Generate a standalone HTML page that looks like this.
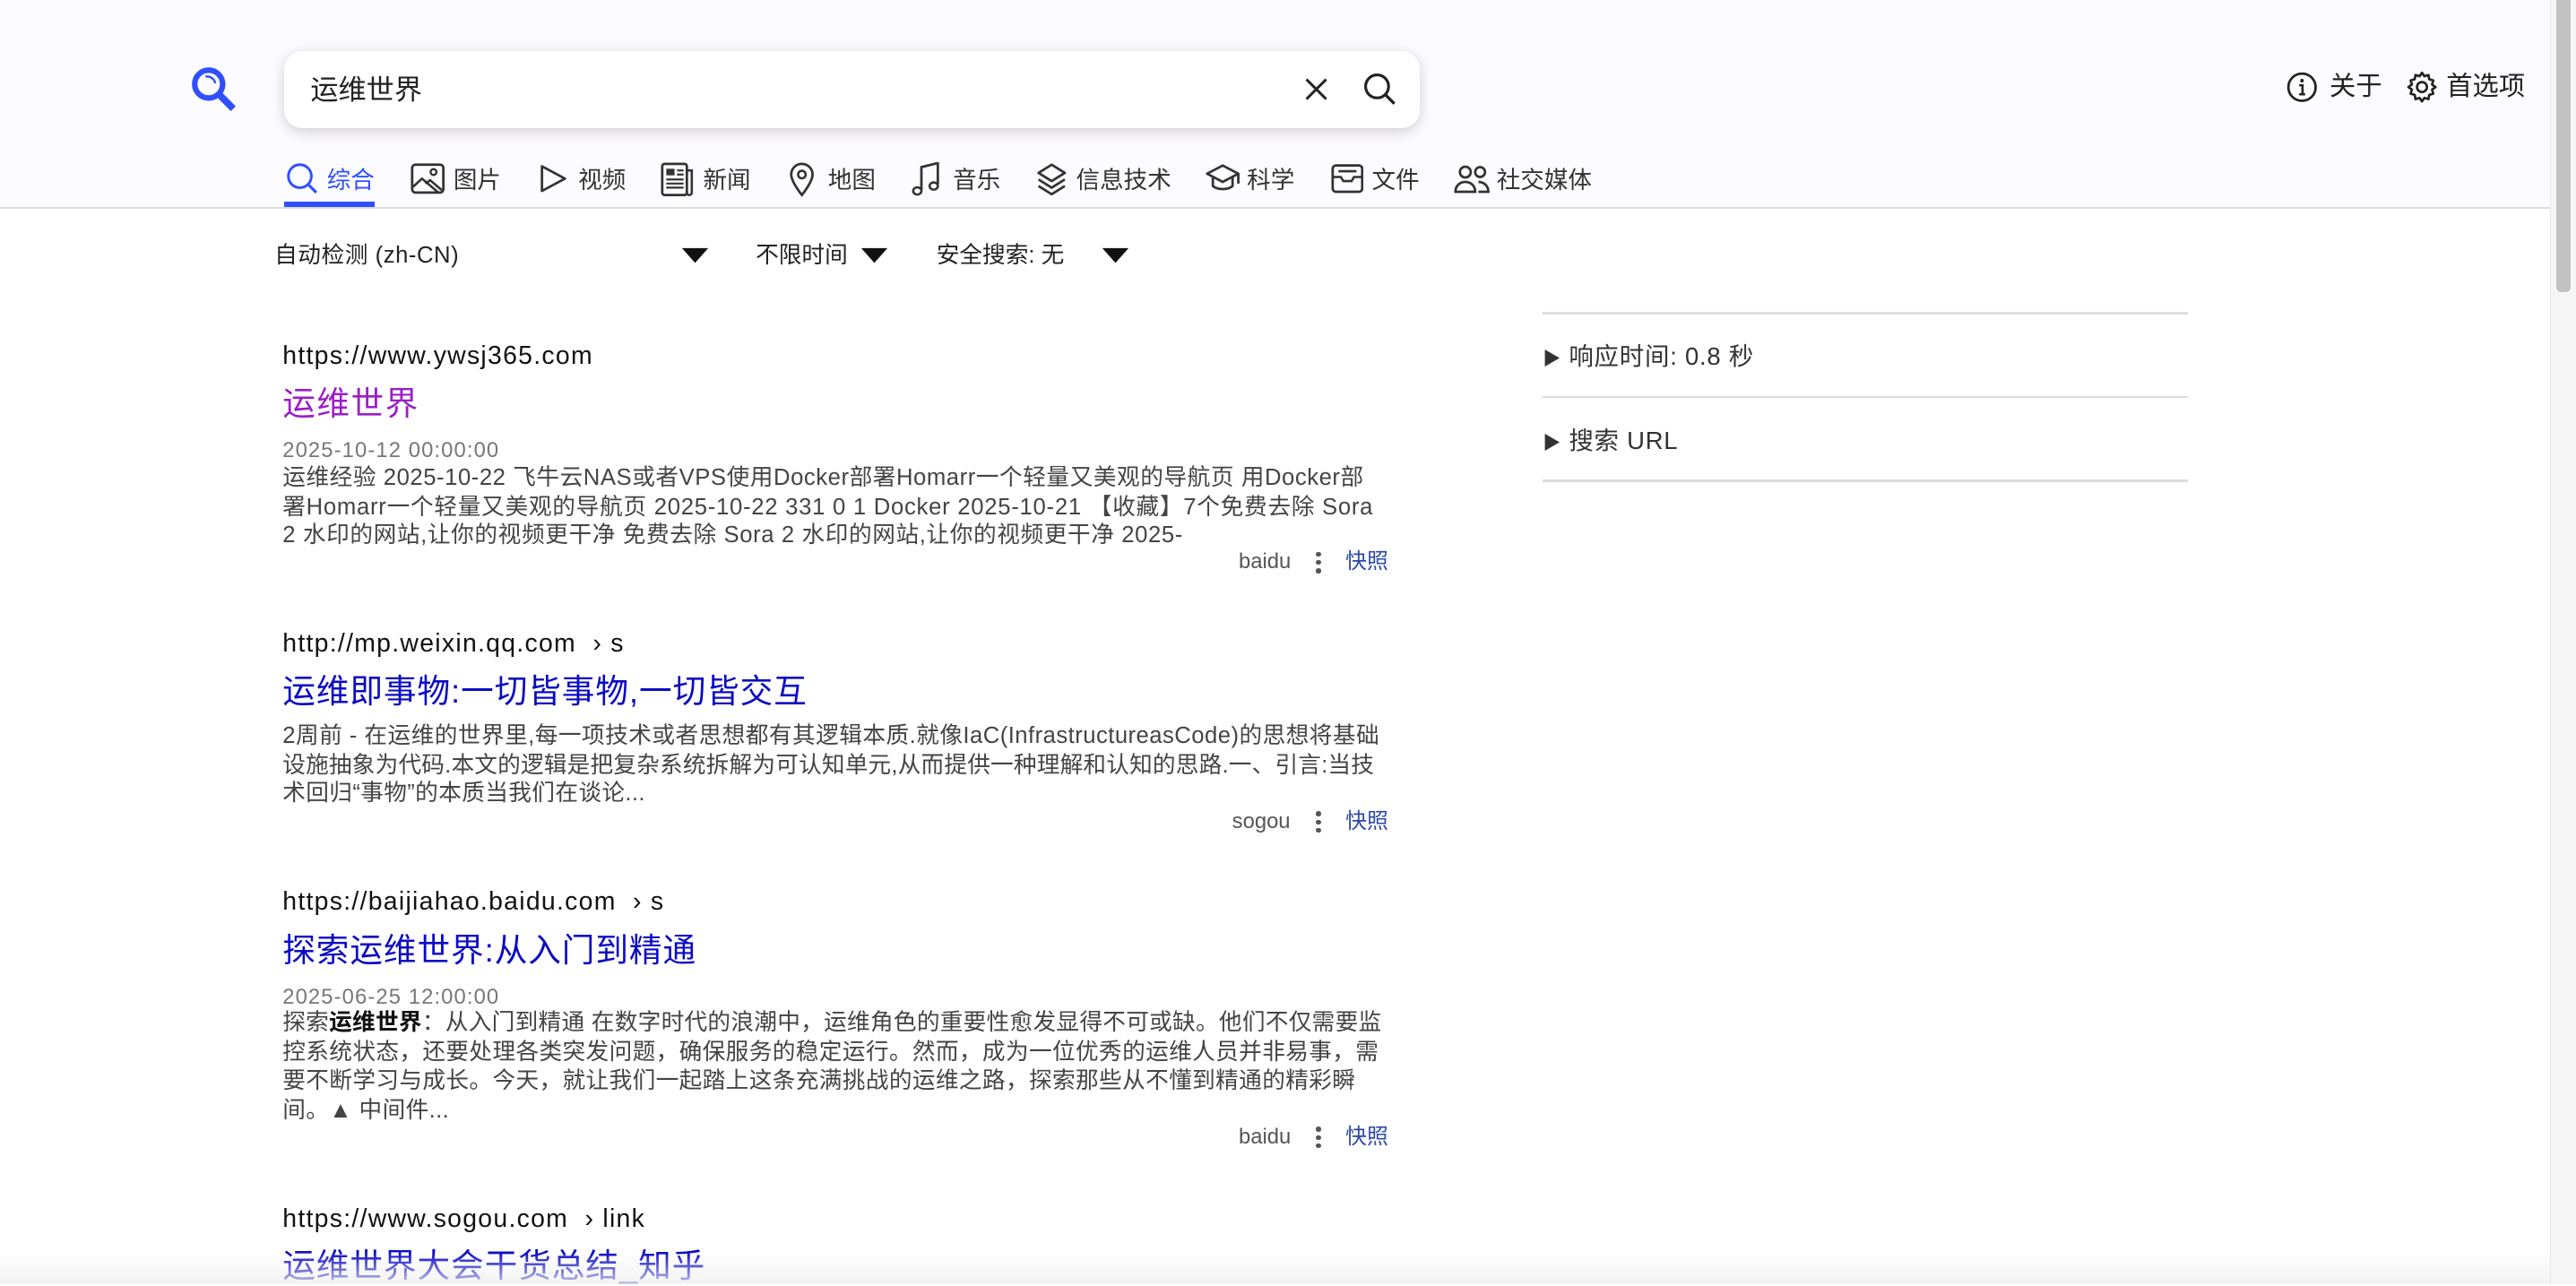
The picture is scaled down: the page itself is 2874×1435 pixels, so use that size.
<!DOCTYPE html>
<html><head><meta charset="utf-8">
<style>
html{zoom:1.8329}
*{margin:0;padding:0;box-sizing:border-box}
body{width:1568px;height:782px;overflow:hidden;background:#fff;font-family:"Liberation Sans","Noto Sans CJK SC",sans-serif;color:#222;position:relative}
.a{position:absolute;white-space:nowrap}
#hdr{position:absolute;left:0;top:0;width:1552px;height:127px;background:#fcfbff;border-bottom:1.5px solid #ddd}
#box{position:absolute;left:173px;top:31px;width:691px;height:47px;background:#fff;border-radius:11px;box-shadow:0 2px 8px rgba(0,0,0,.18)}
.tab{position:absolute;top:99px;height:22px;font-size:14.5px;line-height:22px;color:#333}
.tab svg{position:absolute;left:0;top:0}
.tab span{position:absolute;white-space:nowrap}
.url{font-size:15.5px;color:#111;line-height:18px;letter-spacing:.7px}
.ttl{font-size:20px;color:#0b0bc4;line-height:24px;letter-spacing:.5px}
.dt{font-size:13px;color:#777;line-height:16px;letter-spacing:.6px}
.sn{font-size:14px;color:#444;line-height:17.5px}
.eng{font-size:13px;color:#555;line-height:16px}
.kz{font-size:13px;color:#2a48a8;line-height:16px}
.dots{position:absolute;width:3px}
.dots i{display:block;width:3px;height:3px;border-radius:50%;background:#555;margin-bottom:2px}
.hr{position:absolute;left:939px;width:393px;height:1.5px;background:#ddd}
.side{font-size:15px;color:#333;line-height:18px;letter-spacing:.4px}
</style></head><body>
<div id="hdr"></div>
<svg class="a" style="left:114px;top:38px" width="34" height="34" viewBox="0 0 34 34"><circle cx="13" cy="13" r="8.5" fill="none" stroke="#3050ff" stroke-width="3.4"/><path d="M11 8.5a5 5 0 0 1 6 4" fill="none" stroke="#3050ff" stroke-width="1.3"/><path d="M19 19l9 9" stroke="#3050ff" stroke-width="4.2"/></svg>
<div id="box"></div>
<div class="a" style="left:189px;top:44px;font-size:17px;line-height:22px;color:#222">运维世界</div>
<svg class="a" style="left:793px;top:46px" width="17" height="17" viewBox="0 0 17 17"><path d="M2.5 2.5l12 12M14.5 2.5l-12 12" stroke="#222" stroke-width="1.6"/></svg>
<svg class="a" style="left:829px;top:43px" width="22" height="22" viewBox="0 0 22 22"><circle cx="9.5" cy="9.5" r="7" fill="none" stroke="#222" stroke-width="1.7"/><path d="M14.5 14.5l5.5 5.5" stroke="#222" stroke-width="1.8"/></svg>
<svg class="a" style="left:1391px;top:43px" width="20" height="20" viewBox="0 0 20 20"><circle cx="10" cy="10" r="8.3" fill="none" stroke="#222" stroke-width="1.5"/><circle cx="10" cy="6" r="1.1" fill="#222"/><path d="M8.3 8.8h2v5.5M8.3 14.3h3.6" fill="none" stroke="#222" stroke-width="1.4"/></svg>
<div class="a" style="left:1418px;top:43px;font-size:16px;line-height:20px;color:#222">关于</div>
<svg class="a" style="left:1463px;top:42px" width="22" height="22" viewBox="0 0 24 24"><path d="M12 2.5l1.6 2.3 2.7-.8.5 2.8 2.7.8-.8 2.7 2.3 1.7-2.3 1.7.8 2.7-2.7.8-.5 2.8-2.7-.8L12 21.5l-1.6-2.3-2.7.8-.5-2.8-2.7-.8.8-2.7L3 12l2.3-1.7-.8-2.7 2.7-.8.5-2.8 2.7.8z" fill="none" stroke="#222" stroke-width="1.6" stroke-linejoin="round"/><circle cx="12" cy="12" r="3.3" fill="none" stroke="#222" stroke-width="1.6"/></svg>
<div class="a" style="left:1489px;top:43px;font-size:16px;line-height:20px;color:#222">首选项</div>

<div class="tab" style="left:174px;color:#3050ff"><svg width="20" height="20" viewBox="0 0 20 20"><circle cx="8.5" cy="8.5" r="7" fill="none" stroke="#3050ff" stroke-width="1.6"/><path d="M13.5 13.5l5 5" stroke="#3050ff" stroke-width="1.7"/></svg><span style="left:25px">综合</span></div>
<div class="a" style="left:173px;top:123px;width:55px;height:3px;background:#3050ff"></div>
<div class="tab" style="left:250px"><svg width="21" height="20" viewBox="0 0 21 20"><rect x="1" y="1.5" width="19" height="17" rx="2" fill="none" stroke="#333" stroke-width="1.5"/><circle cx="14" cy="6" r="1.8" fill="none" stroke="#333" stroke-width="1.3"/><path d="M1.5 15l5.5-5 10 8.5M9 13l3-2 7 6" fill="none" stroke="#333" stroke-width="1.4"/></svg><span style="left:26px">图片</span></div>
<div class="tab" style="left:328px"><svg width="18" height="20" viewBox="0 0 18 20"><path d="M2 2.5v15l14-7.5z" fill="none" stroke="#333" stroke-width="1.5" stroke-linejoin="round"/></svg><span style="left:24px">视频</span></div>
<div class="tab" style="left:402px"><svg width="21" height="21" viewBox="0 0 21 21"><rect x="1" y="1" width="15" height="19" rx="1.5" fill="none" stroke="#333" stroke-width="1.5"/><path d="M16 5h3v13.5a1.5 1.5 0 0 1-3 0" fill="none" stroke="#333" stroke-width="1.4"/><rect x="3.5" y="4" width="5" height="4" fill="#333"/><path d="M10 5h4M10 7.5h4M3.5 10.5h10.5M3.5 13h10.5M3.5 15.5h10.5" stroke="#333" stroke-width="1.2"/></svg><span style="left:26px">新闻</span></div>
<div class="tab" style="left:480px"><svg width="16" height="21" viewBox="0 0 16 21"><path d="M8 20S1.5 12 1.5 7.5a6.5 6.5 0 0 1 13 0C14.5 12 8 20 8 20z" fill="none" stroke="#333" stroke-width="1.5"/><circle cx="8" cy="7.5" r="2.3" fill="none" stroke="#333" stroke-width="1.4"/></svg><span style="left:24px">地图</span></div>
<div class="tab" style="left:555px"><svg width="18" height="21" viewBox="0 0 18 21"><path d="M6 17V3l10-2.5v13" fill="none" stroke="#333" stroke-width="1.5"/><ellipse cx="3.5" cy="17.5" rx="2.5" ry="2.2" fill="none" stroke="#333" stroke-width="1.4"/><ellipse cx="13.5" cy="14.5" rx="2.5" ry="2.2" fill="none" stroke="#333" stroke-width="1.4"/></svg><span style="left:25px">音乐</span></div>
<div class="tab" style="left:630px"><svg width="20" height="21" viewBox="0 0 20 21"><path d="M10 1.5l8 5-8 5-8-5zM2 10.5l8 5 8-5M2 14.5l8 5 8-5" fill="none" stroke="#333" stroke-width="1.5" stroke-linejoin="round"/></svg><span style="left:25px">信息技术</span></div>
<div class="tab" style="left:733px"><svg width="22" height="20" viewBox="0 0 22 20"><path d="M11 2l9.5 5-9.5 5-9.5-5z" fill="none" stroke="#333" stroke-width="1.5" stroke-linejoin="round"/><path d="M5 9v5.5c3 2.5 9 2.5 12 0V9M20.5 7v6" fill="none" stroke="#333" stroke-width="1.5"/></svg><span style="left:26px">科学</span></div>
<div class="tab" style="left:810px"><svg width="20" height="20" viewBox="0 0 20 20"><rect x="1" y="2" width="18" height="16" rx="2" fill="none" stroke="#333" stroke-width="1.5"/><path d="M1 9h5l1.5 2.5h5L14 9h5M4.5 5.5h11" fill="none" stroke="#333" stroke-width="1.4"/></svg><span style="left:25px">文件</span></div>
<div class="tab" style="left:885px"><svg width="22" height="20" viewBox="0 0 22 20"><circle cx="7" cy="6" r="3.3" fill="none" stroke="#333" stroke-width="1.5"/><circle cx="16" cy="6" r="3" fill="none" stroke="#333" stroke-width="1.5"/><path d="M1 18c0-4 3-6 6-6s6 2 6 6zM15 12c3 0 6 2 6 6h-6" fill="none" stroke="#333" stroke-width="1.5"/></svg><span style="left:26px">社交媒体</span></div>

<div class="a" style="left:167px;top:147px;font-size:14px;line-height:18px;color:#222;letter-spacing:.3px">自动检测 (zh-CN)</div>
<svg class="a" style="left:414px;top:150px" width="18" height="11"><path d="M1 1h16L9 10z" fill="#111"/></svg>
<div class="a" style="left:460px;top:147px;font-size:14px;line-height:18px;color:#222">不限时间</div>
<svg class="a" style="left:523px;top:150px" width="18" height="11"><path d="M1 1h16L9 10z" fill="#111"/></svg>
<div class="a" style="left:570px;top:147px;font-size:14px;line-height:18px;color:#222">安全搜索: 无</div>
<svg class="a" style="left:670px;top:150px" width="18" height="11"><path d="M1 1h16L9 10z" fill="#111"/></svg>

<!-- result 1 -->
<div class="a url" style="left:172px;top:208px">https://www.ywsj365.com</div>
<div class="a ttl" style="left:172px;top:234px;color:#9b1fc6;letter-spacing:.8px">运维世界</div>
<div class="a dt" style="left:172px;top:266px">2025-10-12 00:00:00</div>
<div class="a sn" style="left:172px;top:282px;letter-spacing:.3px">运维经验 2025-10-22 飞牛云NAS或者VPS使用Docker部署Homarr一个轻量又美观的导航页 用Docker部</div>
<div class="a sn" style="left:172px;top:300px;letter-spacing:.4px">署Homarr一个轻量又美观的导航页 2025-10-22 331 0 1 Docker 2025-10-21 【收藏】7个免费去除 Sora</div>
<div class="a sn" style="left:172px;top:317px;letter-spacing:.33px">2 水印的网站,让你的视频更干净 免费去除 Sora 2 水印的网站,让你的视频更干净 2025-</div>
<div class="a eng" style="left:754px;top:334px">baidu</div>
<div class="dots" style="left:801px;top:336px"><i></i><i></i><i></i></div>
<div class="a kz" style="left:819px;top:334px">快照</div>

<!-- result 2 -->
<div class="a url" style="left:172px;top:383px">http://mp.weixin.qq.com &nbsp;› s</div>
<div class="a ttl" style="left:172px;top:409px">运维即事物:一切皆事物,一切皆交互</div>
<div class="a sn" style="left:172px;top:439px;letter-spacing:.25px">2周前 - 在运维的世界里,每一项技术或者思想都有其逻辑本质.就像IaC(InfrastructureasCode)的思想将基础</div>
<div class="a sn" style="left:172px;top:457px;letter-spacing:.1px">设施抽象为代码.本文的逻辑是把复杂系统拆解为可认知单元,从而提供一种理解和认知的思路.一、引言:当技</div>
<div class="a sn" style="left:172px;top:474px;letter-spacing:.2px">术回归“事物”的本质当我们在谈论...</div>
<div class="a eng" style="left:750px;top:492px">sogou</div>
<div class="dots" style="left:801px;top:494px"><i></i><i></i><i></i></div>
<div class="a kz" style="left:819px;top:492px">快照</div>

<!-- result 3 -->
<div class="a url" style="left:172px;top:540px">https://baijiahao.baidu.com &nbsp;› s</div>
<div class="a ttl" style="left:172px;top:567px">探索运维世界:从入门到精通</div>
<div class="a dt" style="left:172px;top:599px">2025-06-25 12:00:00</div>
<div class="a sn" style="left:172px;top:614px;letter-spacing:.15px">探索<b style="color:#111">运维世界</b>：从入门到精通 在数字时代的浪潮中，运维角色的重要性愈发显得不可或缺。他们不仅需要监</div>
<div class="a sn" style="left:172px;top:632px;letter-spacing:.2px">控系统状态，还要处理各类突发问题，确保服务的稳定运行。然而，成为一位优秀的运维人员并非易事，需</div>
<div class="a sn" style="left:172px;top:649px;letter-spacing:.2px">要不断学习与成长。今天，就让我们一起踏上这条充满挑战的运维之路，探索那些从不懂到精通的精彩瞬</div>
<div class="a sn" style="left:172px;top:667px;letter-spacing:.2px">间。▲ 中间件...</div>
<div class="a eng" style="left:754px;top:684px">baidu</div>
<div class="dots" style="left:801px;top:686px"><i></i><i></i><i></i></div>
<div class="a kz" style="left:819px;top:684px">快照</div>

<!-- result 4 -->
<div class="a url" style="left:172px;top:733px">https://www.sogou.com &nbsp;› link</div>
<div class="a ttl" style="left:172px;top:759px">运维世界大会干货总结_知乎</div>

<!-- sidebar -->
<div class="hr" style="top:190px"></div>
<div class="a side" style="left:939px;top:208px"><span style="font-size:11px">▶</span> 响应时间: 0.8 秒</div>
<div class="hr" style="top:241px"></div>
<div class="a side" style="left:939px;top:259px"><span style="font-size:11px">▶</span> 搜索 URL</div>
<div class="hr" style="top:292px"></div>

<div class="a" style="left:0;top:762px;width:1552px;height:20px;background:linear-gradient(rgba(240,240,240,0),rgba(240,240,240,.8))"></div>
<!-- scrollbar -->
<div class="a" style="left:1552px;top:0;width:16px;height:782px;background:#f6f6f6;border-left:1px solid #e6e6e6"></div>
<div class="a" style="left:1556px;top:0;width:9px;height:178px;background:#c1c1c1;border-radius:0 0 3px 3px"></div>
</body></html>
